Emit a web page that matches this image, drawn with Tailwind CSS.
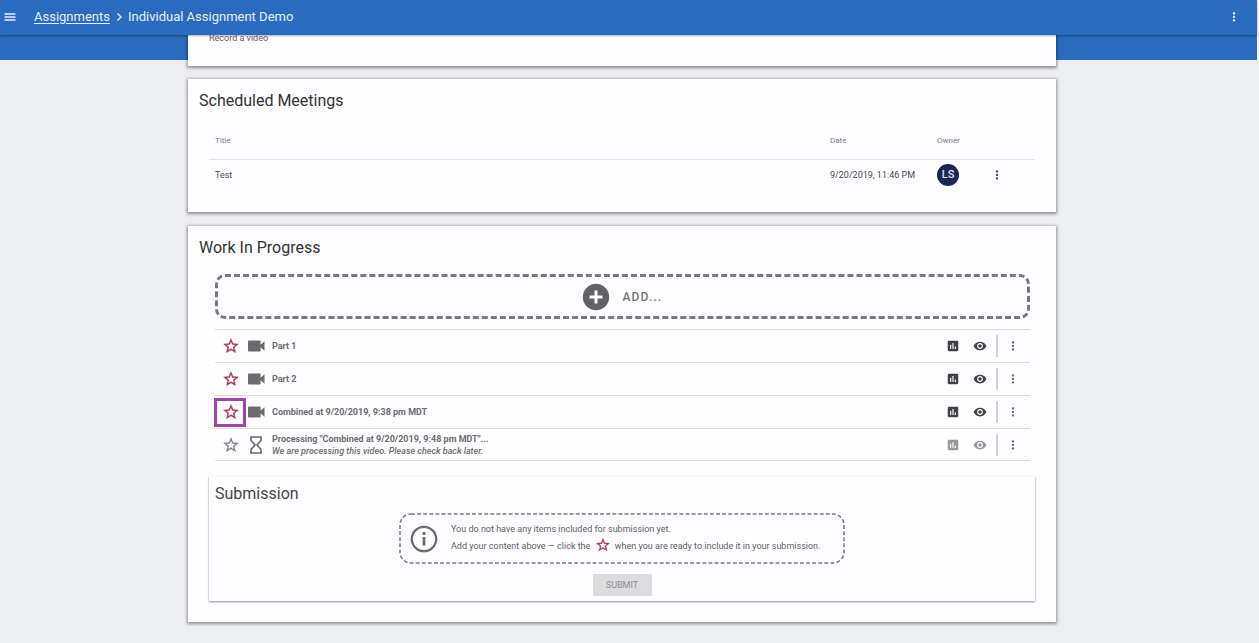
<!DOCTYPE html>
<html lang="en">
<head>
<meta charset="utf-8">
<meta name="viewport" content="width=device-width, initial-scale=1">
<title>Individual Assignment Demo</title>
<script src="https://cdn.jsdelivr.net/npm/@tailwindcss/browser@4"></script>
</head>
<body class="min-h-screen bg-[#edeef2] font-[Roboto,sans-serif] text-[9px] leading-3 text-[#5f5f62]">
<svg class="hidden">
  <symbol id="star" viewBox="0 0 24 24"><path fill="currentColor" stroke="currentColor" stroke-width=".4" d="M22 9.240l-7.190-.62L12 2 9.190 8.630 2 9.240l5.460 4.730L5.820 21 12 17.270 18.180 21l-1.630-7.030L22 9.240zM12 15.400l-3.760 2.270 1-4.280-3.320-2.880 4.380-.38L12 6.100l1.710 4.040 4.380.38-3.320 2.880 1 4.280L12 15.400z"/></symbol>
  <symbol id="dots" viewBox="0 0 24 24"><path fill="currentColor" d="M12 8c1.100 0 2-.9 2-2s-.9-2-2-2-2 .9-2 2 .9 2 2 2zm0 2c-1.100 0-2 .9-2 2s.9 2 2 2 2-.9 2-2-.9-2-2-2zm0 6c-1.100 0-2 .9-2 2s.9 2 2 2 2-.9 2-2-.9-2-2-2z"/></symbol>
  <symbol id="video" viewBox="0 0 17 12"><path fill="currentColor" d="M1 .5h10.800a.8.8 0 0 1 .8.8v3.500L16.500 1.300v9.400l-3.900-3.500v3.500a.8.800 0 0 1-.8.8H1a1 1 0 0 1-1-1v-9a1 1 0 0 1 1-1z"/></symbol>
  <symbol id="chart" viewBox="0 0 24 24"><path fill="currentColor" d="M19 3H5c-1.100 0-2 .9-2 2v14c0 1.100.9 2 2 2h14c1.100 0 2-.9 2-2V5c0-1.100-.9-2-2-2zM9 17H7v-7h2v7zm4 0h-2V7h2v10zm4 0h-2v-4h2v4z"/></symbol>
  <symbol id="eye" viewBox="0 0 24 24"><path fill="currentColor" d="M12 4.500C7 4.500 2.730 7.610 1 12c1.730 4.390 6 7.500 11 7.500s9.270-3.110 11-7.500c-1.730-4.390-6-7.500-11-7.500zM12 17c-2.760 0-5-2.240-5-5s2.240-5 5-5 5 2.240 5 5-2.240 5-5 5zm0-8c-1.660 0-3 1.340-3 3s1.340 3 3 3 3-1.340 3-3-1.340-3-3-3z"/></symbol>
</svg>

<div class="border-r-2 border-[#f8f8fb]">
  <header class="relative z-10 flex h-[35px] items-center bg-[#2b6cbe] pr-4 pb-0.5 text-[13px] leading-4 text-[#e6eefa] shadow-[0_1px_2px_rgba(0,0,0,0.35)]">
    <button type="button" aria-label="Menu" class="ml-1 mr-[18px] block"><svg class="h-3 w-3" viewBox="0 0 12 12"><path d="M.5 3h11M.5 6h11M.5 9h11" stroke="currentColor" stroke-width="1.400"/></svg></button>
    <nav aria-label="Breadcrumb" class="flex items-center">
      <a href="#" class="underline underline-offset-2">Assignments</a>
      <svg class="mx-1 size-2.5" viewBox="0 0 10 10"><path d="M3.500 1.500L7 5 3.500 8.500" fill="none" stroke="currentColor" stroke-width="1.400"/></svg>
      <span>Individual Assignment Demo</span>
    </nav>
    <button type="button" aria-label="More options" class="ml-auto block"><svg class="h-3.5 w-3.5"><use href="#dots"/></svg></button>
  </header>
  <div class="h-[25px] bg-[#2b6cbe]"></div>
</div>
<main class="-mt-7 pr-[15px]">
  <div class="mx-auto flex max-w-[868px] flex-col gap-[13px]">
    <section class="bg-[#fefdff] px-[21px] pb-[22px] shadow-[0_1px_3px_1px_rgba(0,0,0,0.4)]">
      <p>Record a video</p>
    </section>

    <section class="bg-[#fefdff] px-[21px] pt-3 pb-[21px] shadow-[0_1px_3px_1px_rgba(0,0,0,0.4)]">
      <h2 class="-ml-2.5 text-base leading-5 text-[#333]">Scheduled Meetings</h2>
      <table class="mt-3 w-full table-fixed text-left">
        <thead>
          <tr class="h-9 border-b border-[#e2e2e5] text-[8px] text-[#808084]">
            <th class="pl-1.5 font-normal">Title</th>
            <th class="w-[107px] font-normal">Date</th>
            <th class="w-[53px] font-normal">Owner</th>
            <td class="w-[45px]"></td>
          </tr>
        </thead>
        <tbody>
          <tr class="h-8 text-[#48484b]">
            <td class="pl-1.5">Test</td>
            <td>9/20/2019, 11:46 PM</td>
            <td><span class="flex size-[22px] items-center justify-center rounded-full bg-[#1c2757] text-[11px] font-medium text-[#dfe3f2]">LS</span></td>
            <td><button type="button" aria-label="Meeting options" class="block"><svg class="size-3.5"><use href="#dots"/></svg></button></td>
          </tr>
        </tbody>
      </table>
    </section>

    <section class="mt-px bg-[#fefdff] px-[21px] pt-3 pb-[21px] shadow-[0_1px_3px_1px_rgba(0,0,0,0.4)]">
      <h2 class="-ml-2.5 text-base leading-5 text-[#333]">Work In Progress</h2>
      <div class="ml-1.5 mr-[5px] mt-4">
        <button type="button" class="flex h-[45px] w-full items-center justify-center gap-3 rounded-[10px] border-3 border-dashed border-[#7a7a7c] text-xs font-medium tracking-widest text-[#757578]">
          <svg class="size-7" viewBox="0 0 28 28"><circle cx="14" cy="14" r="13.200" fill="#636365"/><path d="M14 7.500v13M7.500 14h13" stroke="#fefdff" stroke-width="3"/></svg>
          ADD...
        </button>
        <ul class="mt-2.5 border-t border-[#dcdcdf] font-bold text-[#6c6c6f]">
          <li class="flex h-[33px] items-center border-b border-[#dcdcdf]">
            <button type="button" aria-label="Include Part 1" class="flex w-8 justify-center text-[#a9355c]"><svg class="size-[18px]"><use href="#star"/></svg></button>
            <svg class="ml-px mr-[7px] h-3 w-[17px]"><use href="#video"/></svg>
            <span class="grow">Part 1</span>
            <button type="button" aria-label="Statistics" class="mr-[13px] block text-[#424245]"><svg class="size-3.5"><use href="#chart"/></svg></button>
            <button type="button" aria-label="Preview" class="mr-[9px] block text-[#424245]"><svg class="size-3.5"><use href="#eye"/></svg></button>
            <span class="mr-2 h-[22px] w-0.5 bg-[#d3d3d6]"></span>
            <button type="button" aria-label="Options" class="mr-2.5 block"><svg class="size-3.5"><use href="#dots"/></svg></button>
          </li>
          <li class="flex h-[33px] items-center border-b border-[#dcdcdf]">
            <button type="button" aria-label="Include Part 2" class="flex w-8 justify-center text-[#a9355c]"><svg class="size-[18px]"><use href="#star"/></svg></button>
            <svg class="ml-px mr-[7px] h-3 w-[17px]"><use href="#video"/></svg>
            <span class="grow">Part 2</span>
            <button type="button" aria-label="Statistics" class="mr-[13px] block text-[#424245]"><svg class="size-3.5"><use href="#chart"/></svg></button>
            <button type="button" aria-label="Preview" class="mr-[9px] block text-[#424245]"><svg class="size-3.5"><use href="#eye"/></svg></button>
            <span class="mr-2 h-[22px] w-0.5 bg-[#d3d3d6]"></span>
            <button type="button" aria-label="Options" class="mr-2.5 block"><svg class="size-3.5"><use href="#dots"/></svg></button>
          </li>
          <li class="flex h-[33px] items-center border-b border-[#dcdcdf]">
            <button type="button" aria-label="Include combined video" class="relative flex w-8 justify-center text-[#a9355c]"><svg class="size-[18px]"><use href="#star"/></svg><span class="absolute -left-px right-px -top-[5px] -bottom-1.5 border-3 border-[#a045a3]"></span></button>
            <svg class="ml-px mr-[7px] h-3 w-[17px]"><use href="#video"/></svg>
            <span class="grow">Combined at 9/20/2019, 9:38 pm MDT</span>
            <button type="button" aria-label="Statistics" class="mr-[13px] block text-[#424245]"><svg class="size-3.5"><use href="#chart"/></svg></button>
            <button type="button" aria-label="Preview" class="mr-[9px] block text-[#424245]"><svg class="size-3.5"><use href="#eye"/></svg></button>
            <span class="mr-2 h-[22px] w-0.5 bg-[#d3d3d6]"></span>
            <button type="button" aria-label="Options" class="mr-2.5 block"><svg class="size-3.5"><use href="#dots"/></svg></button>
          </li>
          <li class="flex h-8 items-center border-b border-[#dcdcdf]">
            <button type="button" disabled aria-label="Include processing video" class="flex w-8 justify-center text-[#858588]"><svg class="size-[18px]"><use href="#star"/></svg></button>
            <svg class="mr-2 h-5 w-[17px]" viewBox="0 0 17 20"><path d="M3 2h12M3 18h12M4 2v3.500L8 10l-4 4.500V18M14 2v3.500L10 10l4 4.500V18" fill="none" stroke="currentColor" stroke-width="1.700"/></svg>
            <p class="grow">Processing "Combined at 9/20/2019, 9:48 pm MDT"...<br><em class="font-medium">We are processing this video. Please check back later.</em></p>
            <button type="button" disabled aria-label="Statistics" class="mr-[13px] block text-[#98989b]"><svg class="size-3.5"><use href="#chart"/></svg></button>
            <button type="button" disabled aria-label="Preview" class="mr-[9px] block text-[#98989b]"><svg class="size-3.5"><use href="#eye"/></svg></button>
            <span class="mr-2 h-[22px] w-0.5 bg-[#d3d3d6]"></span>
            <button type="button" aria-label="Options" class="mr-2.5 block"><svg class="size-3.5"><use href="#dots"/></svg></button>
          </li>
        </ul>
      </div>

      <section class="mt-[15px] flex flex-col px-1.5 pt-2 pb-[5px] shadow-[0_1px_2px_rgba(0,0,0,0.45)]">
        <h2 class="text-base leading-5 text-[#444]">Submission</h2>
        <div class="relative mt-[9px] flex h-[51px] w-full max-w-[446px] items-center self-center pr-2 pl-[11px]">
          <svg class="absolute inset-0 size-full overflow-visible"><rect x="1" y="1" width="100%" height="100%" rx="11" class="h-[calc(100%-2px)] w-[calc(100%-2px)]" fill="none" stroke="#7a7a7d" stroke-width="1.500" stroke-dasharray="4 2.100"/></svg>
          <svg class="mr-[13px] size-7" viewBox="0 0 28 28"><circle cx="14" cy="14" r="12.200" fill="none" stroke="#6a6a6c" stroke-width="2.200"/><path d="M14 7v3M14 12v8.500" stroke="#6a6a6c" stroke-width="2.700"/></svg>
          <div class="pt-[3px]">
            <p>You do not have any items included for submission yet.</p>
            <p class="mt-0.5 leading-4">Add your content above — click the <svg class="mx-0.5 mb-1 inline size-4 align-middle text-[#a9355c]"><use href="#star"/></svg> when you are ready to include it in your submission.</p>
          </div>
        </div>
        <button type="button" disabled class="mt-2.5 h-[22px] w-[59px] self-center rounded-[1px] bg-[#dcdbdd] text-[#8f8f92]">SUBMIT</button>
      </section>
    </section>
  </div>
</main>
</body>
</html>
